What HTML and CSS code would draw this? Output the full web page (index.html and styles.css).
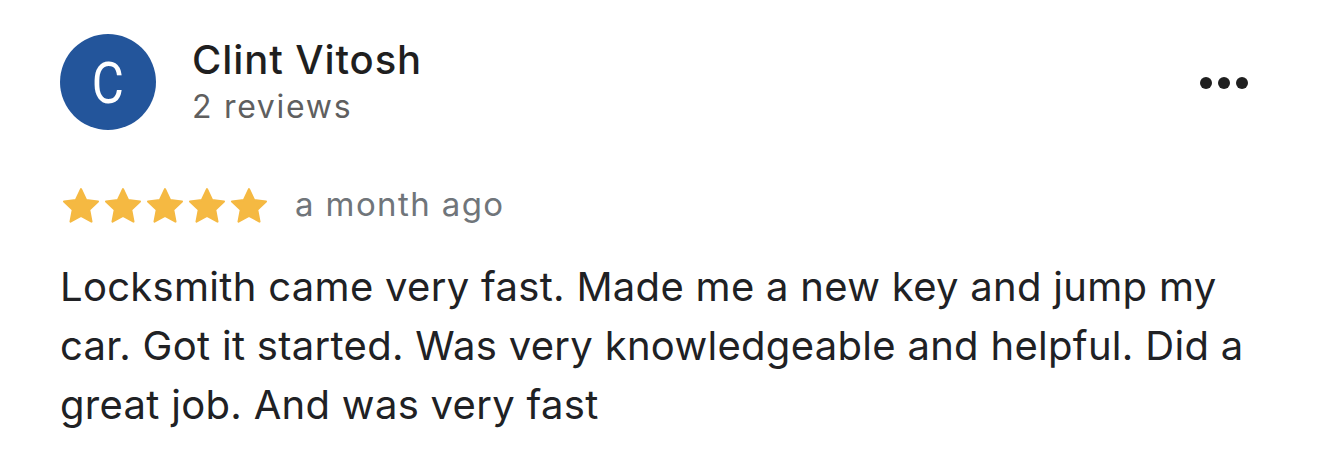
FILE: index.html
```html
<!DOCTYPE html>
<html>
<head>
<meta charset="utf-8">
<link rel="stylesheet" href="styles.css">
</head>
<body>
<div class="review">
  <div class="header">
    <div class="avatar"><span class="initial">C</span></div>
    <div class="who">
      <div class="name">Clint Vitosh</div>
      <div class="count">2 reviews</div>
    </div>
    <div class="more" aria-label="More">
      <svg width="48" height="14" viewBox="0 0 48 14"><circle cx="6" cy="7" r="6" fill="#1f1f1f"/><circle cx="24" cy="7" r="6" fill="#1f1f1f"/><circle cx="42" cy="7" r="6" fill="#1f1f1f"/></svg>
    </div>
  </div>
  <div class="meta">
    <div class="stars">
      <svg viewBox="0 0 24 24" class="star"><path d="M12 2.4l2.9 6.2 6.8.8-5 4.7 1.3 6.8L12 17.6l-6 3.3 1.3-6.8-5-4.7 6.8-.8z"/></svg>
      <svg viewBox="0 0 24 24" class="star"><path d="M12 2.4l2.9 6.2 6.8.8-5 4.7 1.3 6.8L12 17.6l-6 3.3 1.3-6.8-5-4.7 6.8-.8z"/></svg>
      <svg viewBox="0 0 24 24" class="star"><path d="M12 2.4l2.9 6.2 6.8.8-5 4.7 1.3 6.8L12 17.6l-6 3.3 1.3-6.8-5-4.7 6.8-.8z"/></svg>
      <svg viewBox="0 0 24 24" class="star"><path d="M12 2.4l2.9 6.2 6.8.8-5 4.7 1.3 6.8L12 17.6l-6 3.3 1.3-6.8-5-4.7 6.8-.8z"/></svg>
      <svg viewBox="0 0 24 24" class="star"><path d="M12 2.4l2.9 6.2 6.8.8-5 4.7 1.3 6.8L12 17.6l-6 3.3 1.3-6.8-5-4.7 6.8-.8z"/></svg>
    </div>
    <div class="when">a month ago</div>
  </div>
  <p class="text">Locksmith came very fast. Made me a new key and jump my car. Got it started. Was very knowledgeable and helpful. Did a great job. And was very fast</p>
</div>
</body>
</html>
```

FILE: styles.css
```css
html, body {
  margin: 0;
  padding: 0;
  background: #ffffff;
}
body {
  font-family: Inter, "Noto Sans", sans-serif;
  color: #202124;
  width: 1320px;
  height: 474px;
  overflow: hidden;
}
.review {
  padding: 34px 60px 0 60px;
}
.header {
  display: flex;
  align-items: flex-start;
}
.avatar {
  width: 96px;
  height: 96px;
  border-radius: 50%;
  background: #23559b;
  color: #ffffff;
  font-family: Roboto, sans-serif;
  font-size: 58px;
  line-height: 1;
  display: flex;
  align-items: center;
  justify-content: center;
  flex: none;
}
.initial {
  display: block;
  transform: scaleX(0.85);
  margin-top: 2px;
}
.who {
  margin-left: 36px;
  padding-top: 2px;
  flex: 1;
}
.name {
  font-size: 40px;
  font-weight: 500;
  line-height: 48px;
  color: #1f1f1f;
  letter-spacing: 0.9px;
}
.count {
  font-size: 32px;
  line-height: 46px;
  color: #5f5f5f;
  letter-spacing: 1.7px;
}
.more {
  margin-top: 42px;
  margin-right: 12px;
  display: flex;
}
.meta {
  display: flex;
  align-items: center;
  margin-top: 54px;
}
.stars {
  display: flex;
}
.star {
  width: 42px;
  height: 42px;
}
.star path {
  fill: #f5b942;
  stroke: #f5b942;
  stroke-width: 1.2;
  stroke-linejoin: round;
}
.when {
  margin-left: 25px;
  font-size: 33px;
  line-height: 40px;
  padding-bottom: 4px;
  color: #70757a;
  letter-spacing: 1.4px;
}
.text {
  margin: 29px 0 0 0;
  font-size: 40px;
  line-height: 59px;
  color: #202124;
  letter-spacing: 0.3px;
}
```
